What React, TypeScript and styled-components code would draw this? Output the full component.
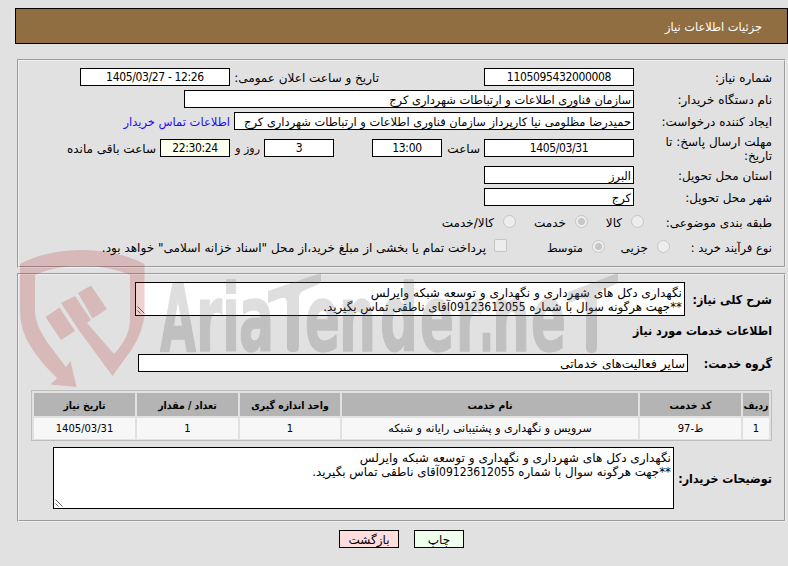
import styled, { createGlobalStyle } from "styled-components";

const GlobalStyle = createGlobalStyle`
  * {
    box-sizing: border-box;
  }
  body {
    margin: 0;
    background-color: #e1e1e1;
  }
`;

const Container = styled.div`
  position: relative;
  width: 788px;
  height: 566px;
  overflow: hidden;
  direction: rtl;
  padding-top: 8px;
  background-color: #e1e1e1;
  color: #000;
  font-family: "DejaVu Sans", sans-serif;
  font-size: 12px;
  line-height: 14px;
`;

const Header = styled.header`
  width: 773px;
  height: 36px;
  display: flex;
  align-items: center;
  padding: 2px 25px 0;
  border: 1px solid #000;
  background-color: #906e41;
  color: #fff;
  font-size: 11.4px;
`;

const Panel = styled.section<{ $height: number; $top: number }>`
  width: 769px;
  height: ${(props) => props.$height}px;
  margin: ${(props) => props.$top}px 2px 0 0;
  padding: 7px 12px 0;
  border: 2px groove #f0f0f0;
`;

const Row = styled.div<{ $height?: number; $gap?: number }>`
  display: flex;
  align-items: center;
  height: ${(props) => props.$height ?? 18}px;
  margin-bottom: ${(props) => props.$gap ?? 4}px;
`;

const Label = styled.div<{ $width: number; $size?: number }>`
  flex: none;
  width: ${(props) => props.$width}px;
  padding-top: 1px;
  font-size: ${(props) => props.$size ?? 12}px;
  white-space: pre-line;
`;

const BoldLabel = styled(Label)`
  font-family: "DejaVu Sans Condensed", "DejaVu Sans", sans-serif;
  font-weight: bold;
  font-size: ${(props) => props.$size ?? 12.35}px;
`;

const ContactLink = styled.a`
  margin-right: 4px;
  padding-top: 1px;
  color: #1a0dff;
  font-size: 11.5px;
  white-space: nowrap;
`;

const Field = styled.div<{ $width: number; $size?: number }>`
  flex: none;
  width: ${(props) => props.$width}px;
  height: 18px;
  padding: 2px 2px 0;
  border: 1px solid #000;
  background-color: #fff;
  font-size: ${(props) => props.$size ?? 11.45}px;
  white-space: nowrap;
`;

const NumberField = styled(Field)<{ $bg?: string }>`
  padding-top: 1px;
  background-color: ${(props) => props.$bg ?? "#fff"};
  font-family: "DejaVu Sans Condensed", "DejaVu Sans", sans-serif;
  font-size: 12px;
  letter-spacing: -0.35px;
  text-align: center;
  direction: ltr;
`;

const Spacer = styled.div<{ $width: number }>`
  flex: none;
  width: ${(props) => props.$width}px;
`;

const Radio = styled.span<{ $checked?: boolean }>`
  flex: none;
  display: flex;
  align-items: center;
  justify-content: center;
  width: 13px;
  height: 13px;
  margin-bottom: 2px;
  border: 1px solid #c6c6c6;
  border-radius: 50%;
  background-color: #ededed;
  &::after {
    content: "";
    width: 7px;
    height: 7px;
    border-radius: 50%;
    background-color: ${(props) => (props.$checked ? "#c6c6c6" : "transparent")};
  }
`;

const Checkbox = styled.span`
  flex: none;
  width: 13px;
  height: 13px;
  margin-bottom: 3px;
  border: 1px solid #c6c6c6;
  border-radius: 2px;
  background-color: #ededed;
`;

const TextArea = styled.div<{ $width: number; $height: number }>`
  position: relative;
  flex: none;
  width: ${(props) => props.$width}px;
  height: ${(props) => props.$height}px;
  padding: 3px 2px 2px;
  border: 1px solid #000;
  background-color: #fff;
  font-size: 12.1px;
  white-space: pre;
`;

const Phone = styled.span`
  font-family: "DejaVu Sans Condensed", "DejaVu Sans", sans-serif;
  font-size: 12px;
  letter-spacing: -0.4px;
`;

const SecondLine = styled.div`
  font-size: 11.85px;
`;

const Grip = styled.svg`
  position: absolute;
  left: 1px;
  bottom: 1px;
`;

const Table = styled.div`
  display: grid;
  grid-template-columns: 26px 101px 296px 100px 101px 101px;
  grid-template-rows: 23px 21px;
  gap: 2px;
  width: 741px;
  height: 51px;
  margin-bottom: 6px;
  padding: 2px 2px 1px;
  border: 1px solid #bdbdbd;
`;

const Cell = styled.div`
  display: flex;
  align-items: center;
  justify-content: center;
  padding-top: 1px;
  background-color: #f7f7f7;
  font-size: 11.1px;
  white-space: nowrap;
`;

const HeadCell = styled(Cell)`
  background-color: #b4b4b4;
  font-family: "DejaVu Sans Condensed", "DejaVu Sans", sans-serif;
  font-weight: bold;
  font-size: 10.4px;
`;

const DigitCell = styled(Cell)`
  font-family: "DejaVu Sans Condensed", "DejaVu Sans", sans-serif;
`;

const Actions = styled.div`
  display: flex;
  gap: 15px;
  margin: 8px 324px 0 0;
`;

const Button = styled.button<{ $width: number; $bg: string }>`
  width: ${(props) => props.$width}px;
  height: 18px;
  padding: 2px 0 0;
  border: 1px solid #000;
  background-color: ${(props) => props.$bg};
  color: #000;
  font-family: inherit;
  font-size: 12px;
  line-height: 14px;
`;

const Watermark = styled.svg`
  position: absolute;
  left: 0;
  top: 240px;
  direction: ltr;
  pointer-events: none;
`;

const columns = ["ردیف", "کد خدمت", "نام خدمت", "واحد اندازه گیری", "تعداد / مقدار", "تاریخ نیاز"];

// letters of the logo: text, left edge, width
const letters: [string, number, number][] = [
  ["A", 160, 36],
  ["r", 196, 26],
  ["i", 222, 18],
  ["a", 239, 35],
  ["e", 305, 35],
  ["n", 339, 37],
  ["d", 380, 38],
  ["e", 420, 34],
  ["r", 456, 25],
  [".", 479, 15],
  ["n", 492, 38],
  ["e", 531, 35],
];

function ResizeGrip() {
  return (
    <Grip width="8" height="8" viewBox="0 0 8 8">
      <path d="M0.5 0.5L7.5 7.5M0.5 4.5L3.5 7.5" stroke="#666" fill="none" />
    </Grip>
  );
}

function Description() {
  return (
    <>
      نگهداری دکل های شهرداری و نگهداری و توسعه شبکه وایرلس
      <SecondLine>
        **جهت هرگونه سوال با شماره <Phone>09123612055</Phone>آقای ناطقی تماس بگیرید.
      </SecondLine>
    </>
  );
}

function Logo() {
  return (
    <Watermark width="788" height="150" viewBox="0 240 788 150">
      <defs>
        <linearGradient id="shade" gradientUnits="userSpaceOnUse" x1="0" y1="240" x2="0" y2="390">
          <stop offset="0.505" stopColor="#686868" />
          <stop offset="0.505" stopColor="#484848" />
        </linearGradient>
      </defs>
      <g fill="#af1919" fillOpacity="0.2">
        <path d="M20 264Q46 250 82 250Q118 250 144.500 264V312Q144 330 132 349L112.500 376L78 329L61 303L75 296L91 320L87 323L114 354Q130 337 130 319V275Q110 266 82 266Q53 266 35 275V312Q35 324 47 342L66 367L70.500 361L76.500 387L50.500 384.500L57 378Q41 363 31 347Q20 331 20 310Z" />
        <path d="M45.500 317L59.500 307.500L75 331L61 340Z" />
        <path d="M78 293L91 285.500L107 309L92.500 318.500Z" />
      </g>
      <g opacity="0.21" fill="url(#shade)" fontFamily="DejaVu Sans Condensed, DejaVu Sans" fontWeight="bold">
        {letters.map(([char, x, width]) => (
          <text
            key={x}
            x={x}
            y="350.500"
            fontSize="92"
            textLength={width}
            lengthAdjust="spacingAndGlyphs"
            stroke="url(#shade)"
            strokeWidth="1.5"
            strokeLinejoin="round"
          >
            {char}
          </text>
        ))}
        {/* slanted bars over the two tall stems */}
        <path d="M268 291L321 273V283L303 291Q299 293 299 299V347Q299 352 294 352H292Q287 352 287 347V303Q287 297 281 298L268 303Z" />
        <path d="M568 292L618 273V283L601 291Q597 293 597 299V348Q597 353 592 353H591Q586 353 586 348V303Q586 297 580 299L568 303Z" />
      </g>
    </Watermark>
  );
}

function App() {
  return (
    <>
      <GlobalStyle />
      <Container>
        <Header>جزئیات اطلاعات نیاز</Header>
        <Panel $height={209} $top={15}>
          <Row>
            <Label $width={138}>شماره نیاز:</Label>
            <NumberField $width={150}>1105095432000008</NumberField>
            <Spacer $width={105} />
            <Label $width={149}>تاریخ و ساعت اعلان عمومی:</Label>
            <NumberField $width={150}>1405/03/27 - 12:26</NumberField>
          </Row>
          <Row>
            <Label $width={138}>نام دستگاه خریدار:</Label>
            <Field $width={450}>سازمان فناوری اطلاعات و ارتباطات شهرداری کرج</Field>
          </Row>
          <Row>
            <Label $width={138}>ایجاد کننده درخواست:</Label>
            <Field $width={400}>حمیدرضا مظلومی نیا کارپرداز سازمان فناوری اطلاعات و ارتباطات شهرداری کرج</Field>
            <ContactLink>اطلاعات تماس خریدار</ContactLink>
          </Row>
          <Row $height={28} $gap={4}>
            <Label $width={138}>{"مهلت ارسال پاسخ: تا\nتاریخ:"}</Label>
            <NumberField $width={150}>1405/03/31</NumberField>
            <Spacer $width={4} />
            <Label $width={38}>ساعت</Label>
            <NumberField $width={70}>13:00</NumberField>
            <Spacer $width={38} />
            <NumberField $width={70}>3</NumberField>
            <Spacer $width={4} />
            <Label $width={30} $size={11}>روز و</Label>
            <NumberField $width={70} $bg="#ffffee">22:30:24</NumberField>
            <Spacer $width={4} />
            <Label $width={100}>ساعت باقی مانده</Label>
          </Row>
          <Row>
            <Label $width={138}>استان محل تحویل:</Label>
            <Field $width={150}>البرز</Field>
          </Row>
          <Row $gap={7}>
            <Label $width={138}>شهر محل تحویل:</Label>
            <Field $width={150}>کرج</Field>
          </Row>
          <Row $gap={7}>
            <Label $width={128}>طبقه بندی موضوعی:</Label>
            <Radio />
            <Spacer $width={9} />
            <Label $width={34}>کالا</Label>
            <Radio $checked />
            <Spacer $width={9} />
            <Label $width={50}>خدمت</Label>
            <Radio />
            <Spacer $width={9} />
            <Label $width={70}>کالا/خدمت</Label>
          </Row>
          <Row>
            <Label $width={102} $size={11.5}>نوع فرآیند خرید :</Label>
            <Radio />
            <Spacer $width={9} />
            <Label $width={43}>جزیی</Label>
            <Radio $checked />
            <Spacer $width={9} />
            <Label $width={76} $size={11.5}>متوسط</Label>
            <Checkbox />
            <Spacer $width={8} />
            <Label $width={400} $size={12.05}>پرداخت تمام یا بخشی از مبلغ خرید،از محل "اسناد خزانه اسلامی" خواهد بود.</Label>
          </Row>
        </Panel>
        <Panel $height={249} $top={5}>
          <Row $height={34} $gap={5}>
            <BoldLabel $width={87}>شرح کلی نیاز:</BoldLabel>
            <TextArea $width={550} $height={34}>
              <Description />
              <ResizeGrip />
            </TextArea>
          </Row>
          <Row $gap={15}>
            <BoldLabel $width={200}>اطلاعات خدمات مورد نیاز</BoldLabel>
          </Row>
          <Row $gap={18}>
            <BoldLabel $width={84}>گروه خدمت:</BoldLabel>
            <Field $width={550} $size={12.3}>سایر فعالیت‌های خدماتی</Field>
          </Row>
          <Table>
            {columns.map((column) => (
              <HeadCell key={column}>{column}</HeadCell>
            ))}
            <DigitCell>1</DigitCell>
            <DigitCell>ط-97</DigitCell>
            <Cell>سرویس و نگهداری و پشتیبانی رایانه و شبکه</Cell>
            <DigitCell>1</DigitCell>
            <DigitCell>1</DigitCell>
            <DigitCell>1405/03/31</DigitCell>
          </Table>
          <Row $height={62} $gap={0}>
            <BoldLabel $width={98}>توضیحات خریدار:</BoldLabel>
            <TextArea $width={621} $height={62}>
              <Description />
              <ResizeGrip />
            </TextArea>
          </Row>
        </Panel>
        <Actions>
          <Button $width={50} $bg="#eeffee">چاپ</Button>
          <Button $width={60} $bg="#ffdddd">بازگشت</Button>
        </Actions>
        <Logo />
      </Container>
    </>
  );
}

export default App;
